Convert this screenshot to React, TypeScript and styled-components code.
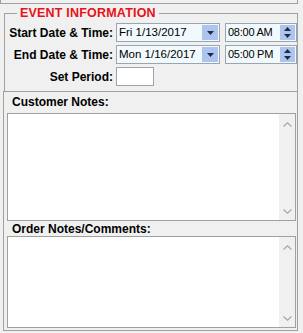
import React from 'react'
import styled, { createGlobalStyle } from 'styled-components'

const GlobalStyle = createGlobalStyle`
  html, body {
    margin: 0;
    padding: 0;
    background: #f0f0f0;
  }
  body {
    font-family: "Liberation Sans", Arial, sans-serif;
  }
`

const Page = styled.div`
  width: 303px;
  height: 333px;
  background: #f0f0f0;
  overflow: hidden;
`

const TopStub = styled.div`
  width: 298px;
  height: 4px;
  box-sizing: border-box;
  border: 1px solid #a0a0a0;
  border-top: none;
`

const GroupBox = styled.fieldset`
  box-sizing: border-box;
  width: 294px;
  margin: 2px 0 0 4px;
  padding: 2px 0 5px 0;
  min-width: 0;
  border: 1px solid #a0a0a0;
  border-bottom: none;
`

const Legend = styled.legend`
  margin-left: 12px;
  padding: 0 3px;
  color: #e8121b;
  font-weight: bold;
  font-size: 12.5px;
  line-height: 15px;
  letter-spacing: 0.2px;
`

const FormGrid = styled.div`
  display: grid;
  grid-template-columns: 108px auto;
  column-gap: 3px;
  row-gap: 3px;
  align-items: center;
`

const Label = styled.span`
  text-align: right;
  font-weight: bold;
  font-size: 12px;
  color: #000;
  white-space: nowrap;
`

const Controls = styled.div`
  display: flex;
  gap: 5px;
`

const Picker = styled.div<{ $w: number }>`
  width: ${p => p.$w}px;
  height: 19px;
  box-sizing: border-box;
  border: 1px solid #9aa5b1;
  background: #f2f9fd;
  display: flex;
  align-items: stretch;
  padding: 1px;
`

const PickerText = styled.span<{ $tight?: boolean }>`
  flex: 1;
  font-size: ${p => (p.$tight ? '11px' : '11.5px')};
  line-height: 15px;
  padding-left: 1px;
  letter-spacing: ${p => (p.$tight ? '-0.25px' : '0')};
  color: #000;
  white-space: nowrap;
`

const DropButton = styled.div`
  width: 16px;
  background: #acc4ee;
  display: flex;
  align-items: center;
  justify-content: center;
`

const SpinButton = styled.div`
  width: 15px;
  background: #acc4ee;
  display: flex;
  flex-direction: column;
  align-items: center;
  justify-content: space-around;
`

const PlainInput = styled.div`
  width: 38px;
  height: 19px;
  box-sizing: border-box;
  border: 1px solid #9aa5b1;
  background: #fff;
`

const NotesPanel = styled.div`
  box-sizing: border-box;
  width: 295px;
  margin-left: 3px;
  border: 1px solid #a0a0a0;
  padding: 0 1px 2px 3px;
`

const NoteLabel = styled.div<{ $pad: string }>`
  font-weight: bold;
  font-size: 12px;
  line-height: 14px;
  padding: ${p => p.$pad};
  color: #000;
`

const NoteBox = styled.div<{ $h: number }>`
  height: ${p => p.$h}px;
  box-sizing: border-box;
  border: 1px solid #a0a0a0;
  background: #fff;
  display: flex;
`

const NoteArea = styled.textarea`
  flex: 1;
  border: none;
  outline: none;
  resize: none;
  background: #fff;
  margin: 0;
  padding: 2px;
  overflow: hidden;
`

const ScrollTrack = styled.div`
  width: 16px;
  background: #f0f0f0;
  display: flex;
  flex-direction: column;
  justify-content: space-between;
  align-items: center;
  padding: 8px 0 6px;
`

function TriangleDown({ color = '#1c2b4a' }: { color?: string }) {
  return (
    <svg width="7" height="4" viewBox="0 0 7 4">
      <path d="M0 0 H7 L3.5 4 Z" fill={color} />
    </svg>
  )
}

function TriangleUp({ color = '#1c2b4a' }: { color?: string }) {
  return (
    <svg width="7" height="4" viewBox="0 0 7 4">
      <path d="M0 4 H7 L3.5 0 Z" fill={color} />
    </svg>
  )
}

function Chevron({ up }: { up?: boolean }) {
  return (
    <svg width="9" height="5" viewBox="0 0 9 5">
      <path d={up ? 'M0.5 4.5 L4.5 0.8 L8.5 4.5' : 'M0.5 0.5 L4.5 4.2 L8.5 0.5'} stroke="#a6a6a6" strokeWidth="1.2" fill="none" />
    </svg>
  )
}

function DateTimeRow({ label, date, time }: { label: string; date: string; time: string }) {
  return (
    <>
      <Label>{label}</Label>
      <Controls>
        <Picker $w={104}>
          <PickerText>{date}</PickerText>
          <DropButton>
            <TriangleDown />
          </DropButton>
        </Picker>
        <Picker $w={72}>
          <PickerText $tight>{time}</PickerText>
          <SpinButton>
            <TriangleUp />
            <TriangleDown />
          </SpinButton>
        </Picker>
      </Controls>
    </>
  )
}

function Notes({ label, height, pad }: { label: string; height: number; pad: string }) {
  return (
    <>
      <NoteLabel $pad={pad}>{label}</NoteLabel>
      <NoteBox $h={height}>
        <NoteArea />
        <ScrollTrack>
          <Chevron up />
          <Chevron />
        </ScrollTrack>
      </NoteBox>
    </>
  )
}

export default function App() {
  return (
    <Page>
      <GlobalStyle />
      <TopStub />
      <GroupBox>
        <Legend>EVENT INFORMATION</Legend>
        <FormGrid>
          <DateTimeRow label="Start Date & Time:" date="Fri 1/13/2017" time="08:00 AM" />
          <DateTimeRow label="End Date & Time:" date="Mon 1/16/2017" time="05:00 PM" />
          <Label>Set Period:</Label>
          <PlainInput />
        </FormGrid>
      </GroupBox>
      <NotesPanel>
        <Notes label="Customer Notes:" height={108} pad="3px 0 4px 5px" />
        <Notes label="Order Notes/Comments:" height={92} pad="1px 0 0 5px" />
      </NotesPanel>
    </Page>
  )
}
